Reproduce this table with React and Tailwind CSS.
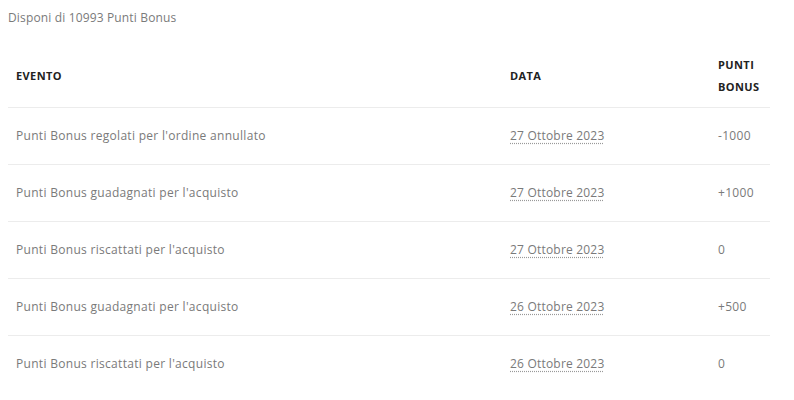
import React from 'react';

const ROWS = [
  { evento: "Punti Bonus regolati per l'ordine annullato", data: '27 Ottobre 2023', punti: '-1000' },
  { evento: "Punti Bonus guadagnati per l'acquisto", data: '27 Ottobre 2023', punti: '+1000' },
  { evento: "Punti Bonus riscattati per l'acquisto", data: '27 Ottobre 2023', punti: '0' },
  { evento: "Punti Bonus guadagnati per l'acquisto", data: '26 Ottobre 2023', punti: '+500' },
  { evento: "Punti Bonus riscattati per l'acquisto", data: '26 Ottobre 2023', punti: '0' },
];

export default function App() {
  return (
    <div className="w-[794px] h-[400px] bg-white px-2 pt-[9px] font-['Open_Sans',sans-serif] overflow-hidden">
      <p className="text-[12px] leading-[17px] text-[#7a7a7a] tracking-[0.15px]">Disponi di 10993 Punti Bonus</p>

      <table className="mt-[19px] w-[762px] table-fixed border-collapse">
        <colgroup>
          <col className="w-[494px]" />
          <col className="w-[208px]" />
          <col className="w-[60px]" />
        </colgroup>
        <thead>
          <tr className="border-b border-[#ececec]">
            <th className="px-2 py-[9px] text-left text-[11px] leading-[22px] font-bold tracking-[0.4px] text-[#222]">EVENTO</th>
            <th className="px-2 py-[9px] text-left text-[11px] leading-[22px] font-bold tracking-[0.4px] text-[#222]">DATA</th>
            <th className="px-2 py-[9px] text-left text-[11px] leading-[22px] font-bold tracking-[0.4px] text-[#222]">PUNTI BONUS</th>
          </tr>
        </thead>
        <tbody>
          {ROWS.map((r, i) => (
            <tr key={i} className={i < ROWS.length - 1 ? 'border-b border-[#ececec]' : ''}>
              <td className="px-2 h-[57px] text-[12px] tracking-[0.3px] text-[#7a7a7a]">{r.evento}</td>
              <td className="px-2 h-[57px] text-[12px] tracking-[0.2px] text-[#7a7a7a]">
                <span className="underline decoration-dotted decoration-[#999] underline-offset-[3px]">{r.data}</span>
              </td>
              <td className="px-2 h-[57px] text-[12px] tracking-[0.3px] text-[#7a7a7a]">{r.punti}</td>
            </tr>
          ))}
        </tbody>
      </table>
    </div>
  );
}
